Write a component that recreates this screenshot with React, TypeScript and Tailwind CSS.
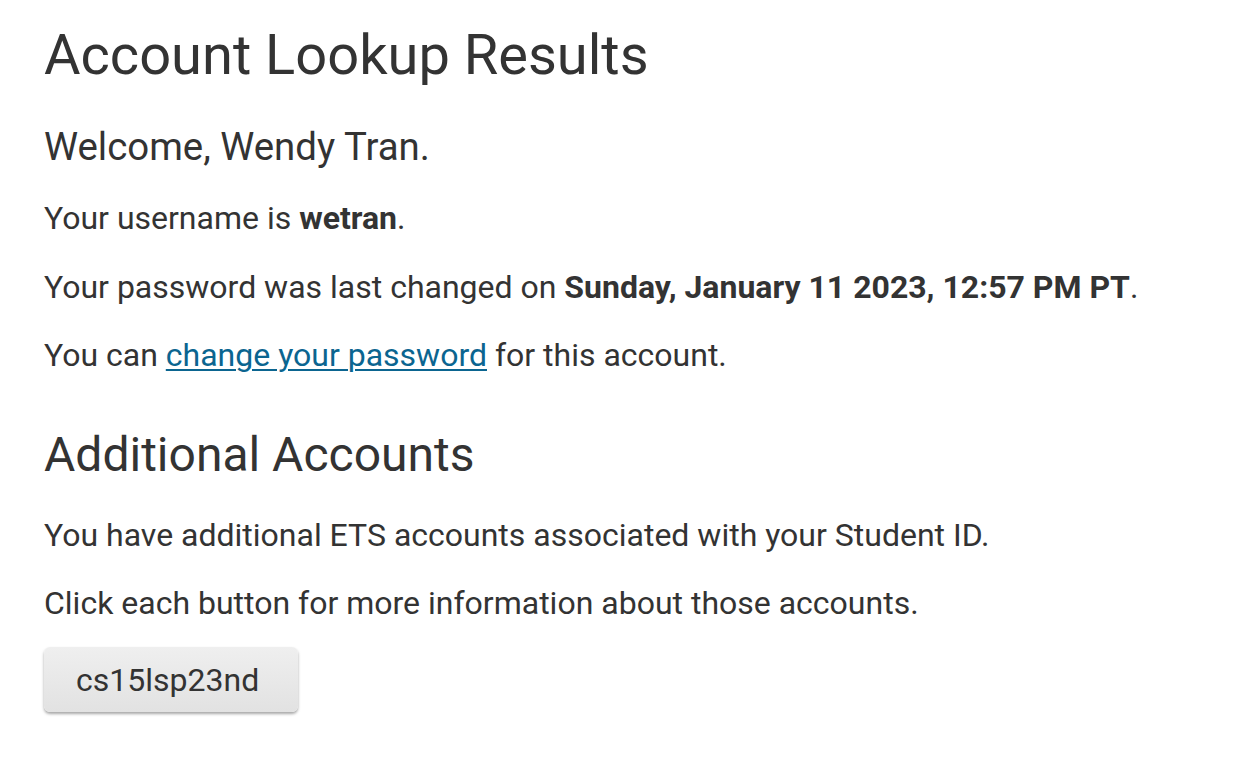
export default function App() {
  return (
    <div className="min-h-screen bg-white text-[#333333] px-[44px] pt-[23px] flex flex-col items-start" style={{ fontFamily: "Roboto, 'Liberation Sans', sans-serif" }}>
      <h1 className="text-[56px] leading-[64px] font-normal">Account Lookup Results</h1>
      <h2 className="mt-[38px] text-[38.4px] leading-[44px] font-normal">Welcome, Wendy Tran.</h2>
      <p className="mt-[29px] text-[32px] leading-[40px]">Your username is <b className="font-bold">wetran</b>.</p>
      <p className="mt-[29px] text-[32px] leading-[40px]">Your password was last changed on <b className="font-bold">Sunday, January 11 2023, 12:57 PM PT</b>.</p>
      <p className="mt-[28px] text-[32px] leading-[40px]">You can <a href="#" className="text-[#0b6590] underline decoration-2 underline-offset-[3px]">change your password</a> for this account.</p>
      <h2 className="mt-[52px] text-[48px] leading-[56px] font-normal">Additional Accounts</h2>
      <p className="mt-[32px] text-[32px] leading-[40px]">You have additional ETS accounts associated with your Student ID.</p>
      <p className="mt-[28px] text-[32px] leading-[40px]">Click each button for more information about those accounts.</p>
      <button className="mt-[24px] w-[254px] h-[65px] pl-[32px] text-left rounded-[6px] bg-gradient-to-b from-[#efefef] to-[#e2e2e2] shadow-[0_2px_3px_rgba(0,0,0,0.35)] text-[32px] text-[#333333]">cs15lsp23nd</button>
    </div>
  );
}
